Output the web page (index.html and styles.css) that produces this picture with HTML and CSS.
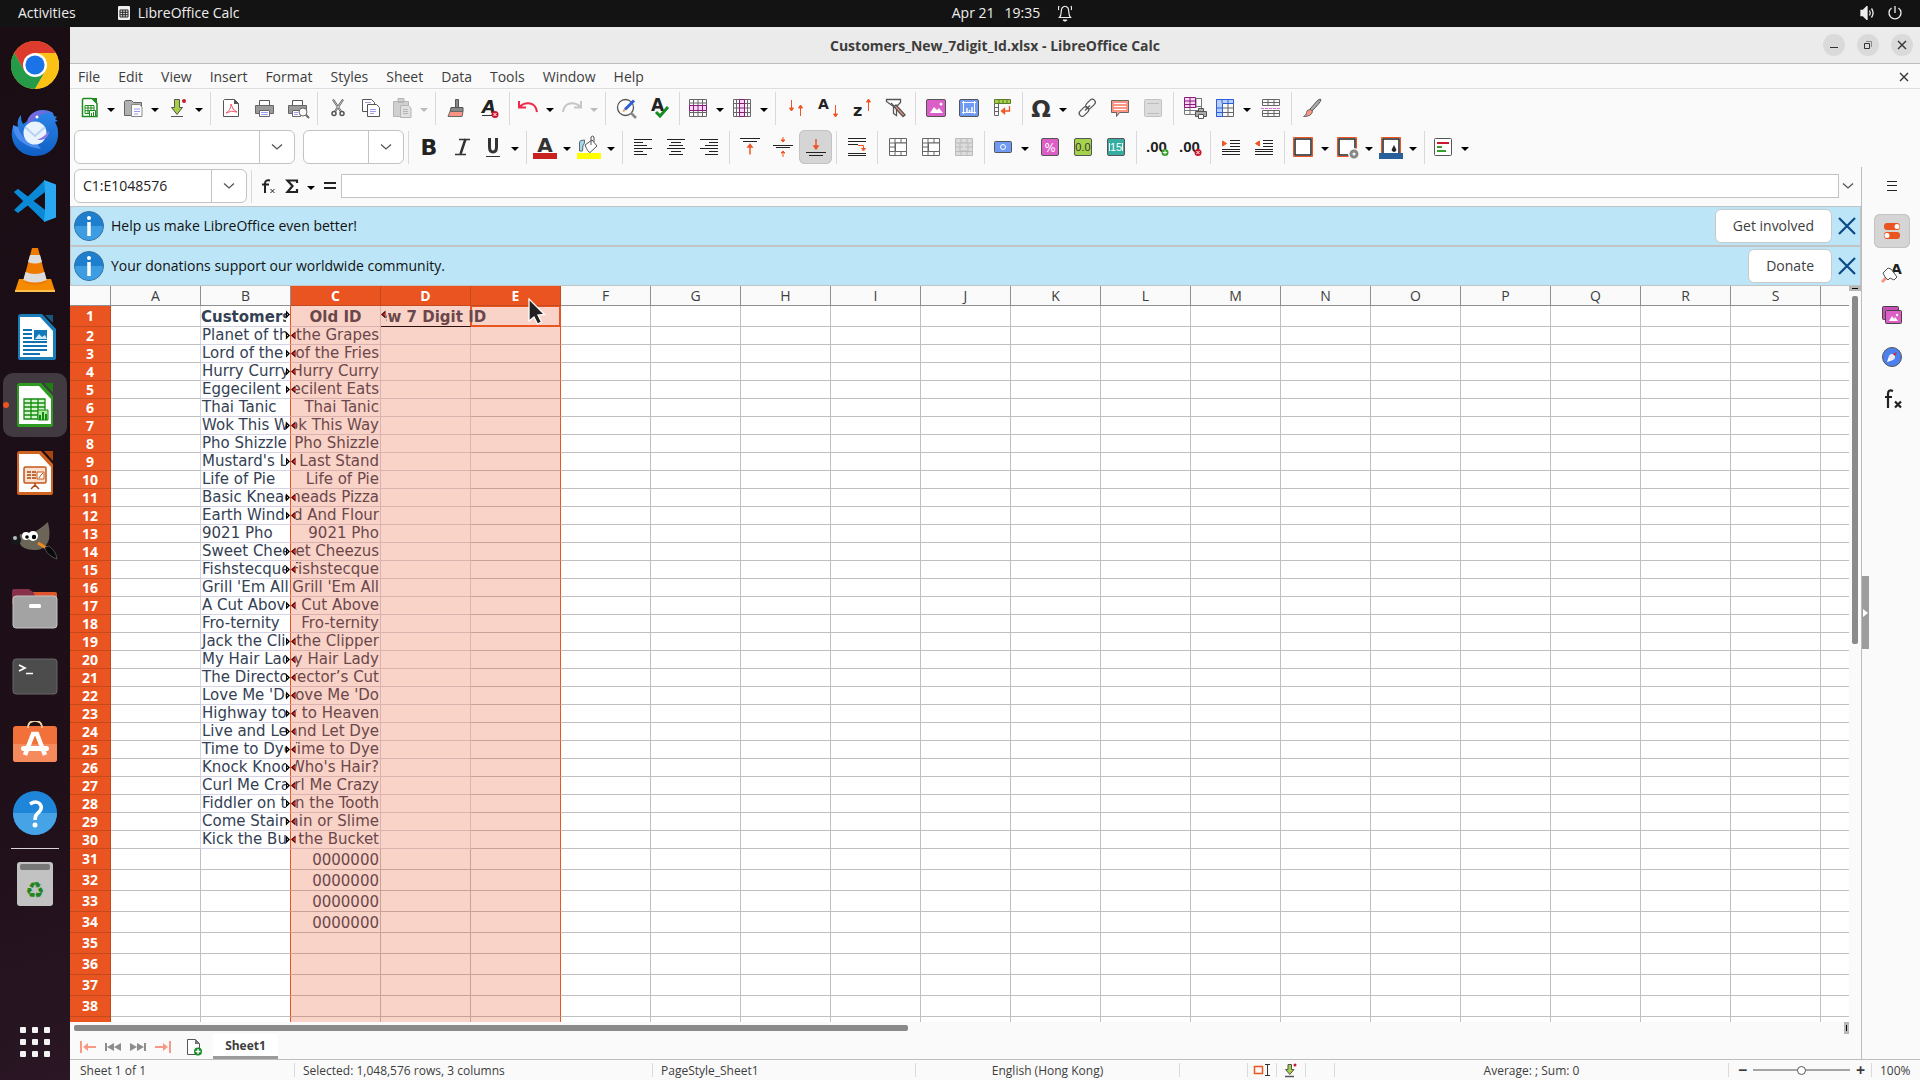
FILE: index.html
```html
<!DOCTYPE html>
<html lang="en">
<head>
<meta charset="utf-8">
<title>Customers_New_7digit_Id.xlsx - LibreOffice Calc</title>
<link rel="stylesheet" href="styles.css">
</head>
<body>
<header class="topbar">
  <div class="top-left">
    <button class="top-btn">Activities</button>
    <button class="top-btn app-btn"><svg width="12" height="14" viewBox="0 0 12 14"><rect width="12" height="14" rx="1" fill="#eee"/><path d="M2 4h8v7H2zM2 6.300h8M2 8.700h8M4.700 4v7M7.300 4v7" fill="none" stroke="#222"/></svg>LibreOffice Calc</button>
  </div>
  <button class="top-btn clock"><span>Apr 21</span><span>19:35</span></button>
  <div class="top-right">
    <svg class="bell" width="14" height="18" viewBox="0 0 14 18" fill="none" stroke="#eee" stroke-width="1.200"><path d="M1.500 13.500C4 11 2.500 7 4 4Q7 .5 10 4C11.500 7 10 11 12.500 13.500z"/><path d="M1 2Q0 4 0.800 6M13 2Q14 4 13.200 6"/><path d="M5 16h4l-2 1z" fill="#eee"/></svg>
    <svg width="16" height="14" viewBox="0 0 16 14" fill="none" stroke="#eee" stroke-width="1.300"><path d="M1 4.500h2l4-4v13l-4-4H1z" fill="#eee"/><path d="M9.500 4.500q1.600 2.500 0 5M11.500 2.500q3.200 4.500 0 9" /></svg>
    <svg width="14" height="14" viewBox="0 0 14 14" fill="none" stroke="#eee" stroke-width="1.300"><path d="M3.600 2A6 6 0 1 0 10.400 2M7 0v7"/></svg>
  </div>
</header>
<div class="desktop">
<nav class="dock" aria-label="Dock">
  <button class="dk" aria-label="Chrome"><svg viewBox="0 0 48 48"><circle cx="24" cy="24" r="24" fill="#fbc116"/><path d="M3.200 12A24 24 0 0 1 44.800 12H24L13.600 30z" fill="#dd3b2e"/><path d="M3.200 12A24 24 0 0 0 24 48L34.400 30 24 24 13.600 30z" fill="#259a49"/><path d="M24 12h20.800A24 24 0 0 1 24 48L34.400 30z" fill="#fbc116"/><circle cx="24" cy="24" r="12" fill="#fff"/><circle cx="24" cy="24" r="9.600" fill="#1b73e8"/></svg></button>
  <button class="dk" aria-label="Thunderbird"><svg viewBox="0 0 48 48"><defs><linearGradient id="tb" x1="0" y1="0" x2="0" y2="1"><stop offset="0" stop-color="#2f86e8"/><stop offset="1" stop-color="#0f5fc4"/></linearGradient></defs><path d="M10 6c-3 3-4 7-3 12L2 17c-5 16 6 30 22 30s24-12 23-24c0-5-2-8-3-10l3-1-3-2 2-2-3-1-1-3C34-1 22 0 17 10c-1 3-3 4-5 5-2-3-2-6-2-9z" fill="url(#tb)"/><path d="M17 10C21 1 33-1 42 4c-6-1-12 0-17 5-2 3-6 5-9 5z" fill="#6f6ae0"/><path d="M2 16c0 12 9 20 22 23l6 1-3-4C14 32 9 25 7 18z" fill="#4b8cf0"/><circle cx="24" cy="24" r="11.500" fill="#e9f3fd"/><path d="M14 18l10 9 10-9" fill="none" stroke="#b7d3ef" stroke-width="2"/><path d="M30 31c6-1 8-5 8-9-4 5-8 7-12 9z" fill="#8978e8"/><circle cx="26" cy="8" r="1.500" fill="#fff"/></svg></button>
  <button class="dk" aria-label="Visual Studio Code"><svg viewBox="0 0 48 48"><path d="M3 15l4-3 27 21v12z" fill="#0073bd"/><path d="M3 33l4 3 27-21V3z" fill="#0a8ad6"/><path d="M3 15l4-3 27 21v12z" fill="#0a8ad6"/><path d="M33 3l12 4.500v33L33 45l1-11V14z" fill="#2aa9f2"/></svg></button>
  <button class="dk" aria-label="VLC"><svg viewBox="0 0 48 48"><path d="M8 34h32l4 12H4z" fill="#f58b00"/><path d="M4 45h40v2H4z" fill="#ffc04a"/><path d="M21 3h6l9 34q-12 6-24 0z" fill="#ef7a00"/><path d="M19 10h10l2 7q-7 3-14 0zM14.500 27q9.500 4 19 0l2.200 8q-11.700 5-23.400 0z" fill="#dcdcdc"/></svg></button>
  <button class="dk" aria-label="Writer"><svg viewBox="0 0 48 48"><path d="M10 1h21l14 15v29q0 2-2 2H10q-3 0-3-2V4q0-3 3-3z" fill="#1b7db8"/><path d="M9 4h20l13 14v26H9z" fill="#fff"/><path d="M34 2h8v8z" fill="#13587f"/><path d="M12 17h9M12 21h9M12 25h9M12 29h24M12 33h24M12 37h24M12 41h17" stroke="#0f73b3" stroke-width="1.800"/><rect x="23" y="17" width="13" height="10" fill="#1379b8"/><path d="M24 26l4-5 3 3 3-2 2 4z" fill="#cfe8f8"/></svg></button>
  <button class="dk active" aria-label="LibreOffice Calc"><svg viewBox="0 0 48 48"><path d="M9 2h21l12 13v29q0 2-2 2H9q-3 0-3-2V5q0-3 3-3z" fill="#2c9b20"/><path d="M8 5h20l12 13v25H8z" fill="#fff"/><path d="M33 2h9v10z" fill="#1f7d14"/><path d="M13 18h21v20H13z" fill="#d5f5ce"/><path d="M13 18h21v20H13zM13 22h21M13 26h21M13 30h21M13 34h21M20 18v20M27 18v20" fill="none" stroke="#168a10" stroke-width="1.300"/><path d="M27 29h10v10H27z" fill="#a9eb9c" stroke="#168a10"/><path d="M29 39v-5M32 39v-8M35 39v-6" stroke="#168a10" stroke-width="2"/></svg></button>
  <button class="dk" aria-label="Impress"><svg viewBox="0 0 48 48"><path d="M9 2h21l12 13v29q0 2-2 2H9q-3 0-3-2V5q0-3 3-3z" fill="#d0631f"/><path d="M8 5h20l12 13v25H8z" fill="#fff"/><path d="M33 2h9v10z" fill="#aa4510"/><rect x="13" y="18" width="22" height="16" rx="1.500" fill="#fbe0cf" stroke="#c4561a" stroke-width="1.500"/><path d="M16 23h4M16 26h4M16 29h4M21 23h4M21 26h4M21 29h4M20 40l4-4 4 4M24 34v3" stroke="#a8470f" stroke-width="1.500" fill="none"/><path d="M26 23h7v7h-7zM28 29l2-3 2-2" fill="#fff" stroke="#c4561a"/></svg></button>
  <button class="dk" aria-label="GIMP"><svg viewBox="0 0 48 48"><path d="M9 17q6 2 12-1 7-3 16-11 3 14 0 20-4 9-14 8Q11 33 8 25z" fill="#6b6557"/><circle cx="5" cy="23" r="5" fill="#15191c"/><circle cx="4" cy="21" r="2" fill="#bbb"/><circle cx="15" cy="19" r="4" fill="#fff"/><circle cx="22" cy="19" r="5" fill="#fff"/><circle cx="16" cy="20" r="1.800"/><circle cx="23" cy="20" r="2.200"/><path d="M27 26l10 6" stroke="#f08c1c" stroke-width="3"/><path d="M34 30l4-1q7 5 8 13-9-3-12-10z" fill="#090909" stroke="#777" stroke-width=".6"/></svg></button>
  <button class="dk" aria-label="Files"><svg viewBox="0 0 48 48"><path d="M3 4h15l4 3h22q2 0 2 2v10H1V7q0-3 2-3z" fill="#86304a"/><path d="M22 7h22q2 0 2 2v8H28z" fill="#e0562a"/><rect x="2" y="11" width="44" height="32" rx="3" fill="#a3a3a3" stroke="#c4c4c4"/><rect x="18" y="19" width="12" height="4" rx="1.500" fill="#fff"/></svg></button>
  <button class="dk" aria-label="Terminal"><svg viewBox="0 0 48 48"><rect x="2" y="6" width="44" height="35" rx="3" fill="#4c4c4c" stroke="#666"/><path d="M8 12l6 3-6 3M15 20.500h7" stroke="#fff" stroke-width="1.700" fill="none"/></svg></button>
  <button class="dk" aria-label="Software"><svg viewBox="0 0 48 48"><path d="M17 7q0-7 7-7t7 7" fill="none" stroke="#f0d5a0" stroke-width="1.500"/><rect x="2" y="5" width="44" height="36" rx="3" fill="#f2713a"/><path d="M2 23h44v15q0 3-3 3H5q-3 0-3-3z" fill="#f58a5d"/><path d="M17 7q0-7 7-7t7 7" fill="none" stroke="#f0d5a0" stroke-width="1.500"/><path d="M14 34l8-21h4l8 21" fill="none" stroke="#fff" stroke-width="4.500"/><rect x="10" y="25" width="28" height="5" rx="2.500" fill="#fff"/></svg></button>
  <button class="dk" aria-label="Help"><svg viewBox="0 0 48 48"><circle cx="24" cy="24" r="22" fill="#1e85d8"/><path d="M2 24a22 22 0 0 0 44 0z" fill="#46a3e6"/><path d="M19 15q6-4 10 0 3 4-1 8-4 3-4 8" stroke="#fff" stroke-width="3.500" fill="none"/><circle cx="24" cy="36" r="2.500" fill="#fff"/></svg></button>
  <hr>
  <button class="dk" aria-label="Trash"><svg viewBox="0 0 48 48"><rect x="6" y="2" width="36" height="44" rx="3" fill="#c2c2c2"/><rect x="9" y="4" width="30" height="6" rx="2" fill="#777"/><text x="24" y="38" text-anchor="middle" font-family="DejaVu Sans" font-size="22" fill="#21851b">♻</text></svg></button>
  <button class="dk apps" aria-label="Show Applications"><svg viewBox="0 0 48 48" fill="#f3f3f3"><rect x="9" y="9" width="6" height="6" rx="1"/><rect x="21" y="9" width="6" height="6" rx="1"/><rect x="33" y="9" width="6" height="6" rx="1"/><rect x="9" y="21" width="6" height="6" rx="1"/><rect x="21" y="21" width="6" height="6" rx="1"/><rect x="33" y="21" width="6" height="6" rx="1"/><rect x="9" y="33" width="6" height="6" rx="1"/><rect x="21" y="33" width="6" height="6" rx="1"/><rect x="33" y="33" width="6" height="6" rx="1"/></svg></button>
</nav>
<main class="window">
  <div class="titlebar">
    <h1>Customers_New_7digit_Id.xlsx - LibreOffice Calc</h1>
    <div class="winbtns">
      <button aria-label="Minimize"><svg width="10" height="10" viewBox="0 0 10 10"><path d="M1 7.500h8" stroke="#333"/></svg></button>
      <button aria-label="Restore"><svg width="10" height="10" viewBox="0 0 10 10" fill="none" stroke="#333"><path d="M1.500 3.500h5v5h-5z"/><path d="M3 1.500h5.500V7" stroke="#888"/></svg></button>
      <button aria-label="Close"><svg width="10" height="10" viewBox="0 0 10 10"><path d="M1 1l8 8M9 1L1 9" stroke="#333" stroke-width="1.400"/></svg></button>
    </div>
  </div>
  <div class="menubar">
    <button>File</button><button>Edit</button><button>View</button><button>Insert</button><button>Format</button><button>Styles</button><button>Sheet</button><button>Data</button><button>Tools</button><button>Window</button><button>Help</button>
    <button class="docclose" aria-label="Close document"><svg width="10" height="10" viewBox="0 0 10 10"><path d="M1 1l8 8M9 1L1 9" stroke="#333" stroke-width="1.400"/></svg></button>
  </div>
  <div class="toolbar">
    <div class="split"><button class="ic" aria-label="New"><svg viewBox="0 0 24 24"><path d="M6.500 2.500H15l5 5V20.500H5.500V3.500z" fill="#fff" stroke="#1c8a1c" stroke-width="1.500"/><path d="M15 2h5v6z" fill="#1c8a1c"/><path d="M8 9.500h9v8H8zM8 12h9M8 14.700h9M11 9.500v8M14 9.500v8" fill="none" stroke="#1c8a1c"/><path d="M12.500 14.500h6v6h-6zM14.500 20v-3M16.500 20v-4" fill="#fff" stroke="#1c8a1c"/></svg></button><button class="dd" aria-label="New options"></button></div>
    <div class="split"><button class="ic" aria-label="Open"><svg viewBox="0 0 24 24"><path d="M3.500 19V5.500l1-1h6l2 2h8v13h-17z" fill="#b1b1b1" stroke="#666"/><path d="M10.500 8.500h8l2.500 2.500v9.500H10.500z" fill="#fff" stroke="#888"/><path d="M13 13h6M13 15.500h6M13 18h4" stroke="#9b9bf0"/></svg></button><button class="dd" aria-label="Open options"></button></div>
    <div class="split"><button class="ic" aria-label="Save"><svg viewBox="0 0 24 24"><path d="M9.500 3.500h5v8h3l-5.500 7-5.500-7h3z" fill="#a5cf45" stroke="#555"/><path d="M6 20.500h12" stroke="#555"/><circle cx="19" cy="5" r="2" fill="#c9182f"/></svg></button><button class="dd" aria-label="Save options"></button></div>
    <i class="sep"></i>
    <button class="ic" aria-label="Export PDF"><svg viewBox="0 0 24 24"><path d="M5.500 3.500h10l4 4v13h-15v-16z" fill="#fff" stroke="#555"/><path d="M15 3v5h5z" fill="#555"/><path d="M7 17q5-3 5-9 1 6 6 8-6-2-11 1z" fill="none" stroke="#f05868"/></svg></button>
    <button class="ic" aria-label="Print"><svg viewBox="0 0 24 24"><path d="M7.500 4.500h10v5h-10z" fill="#fff" stroke="#555"/><path d="M3.500 9.500h18v8h-18z" fill="#9a9a9a" stroke="#666"/><path d="M7.500 14.500h10v6h-10z" fill="#fff" stroke="#666"/><path d="M9 16.500h7M9 18.500h7" stroke="#9b9bf0"/></svg></button>
    <button class="ic" aria-label="Print preview"><svg viewBox="0 0 24 24"><path d="M7.500 4.500h10v5h-10z" fill="#fff" stroke="#555"/><path d="M3.500 9.500h18v8h-18z" fill="#9a9a9a" stroke="#666"/><path d="M7.500 14.500h8v6h-8z" fill="#fff" stroke="#666"/><path d="M9 16.500h4M9 18.500h4" stroke="#9b9bf0"/><circle cx="18" cy="16" r="4" fill="#fafafa" stroke="#666"/><path d="M21 19l3 3" stroke="#666" stroke-width="2"/></svg></button>
    <i class="sep"></i>
    <button class="ic" aria-label="Cut"><svg viewBox="0 0 24 24" fill="none" stroke="#555"><path d="M7 3.500l8 12M17 3.500l-8 12" stroke-width="2.200"/><path d="M7 3.500l8 12M17 3.500l-8 12" stroke="#ddd" stroke-width=".8"/><circle cx="8" cy="17.500" r="2" stroke-width="1.500"/><circle cx="16" cy="17.500" r="2" stroke-width="1.500"/></svg></button>
    <button class="ic" aria-label="Copy"><svg viewBox="0 0 24 24" fill="#fff" stroke="#555"><path d="M3.500 3.500h9l3 3v9h-12z"/><path d="M8.500 8.500h9l3 3v9h-12z"/><path d="M6 6.500h6M11 13.500h6M11 15.500h6M11 17.500h4" stroke="#9b9bf0"/></svg></button>
    <div class="split off"><button class="ic" aria-label="Paste" disabled><svg viewBox="0 0 24 24" fill="#d0d0d0" stroke="#b5b5b5"><path d="M3.500 5.500h15v15h-15zM8 2.500h6v4H8z"/><path d="M10.500 9.500h8l2.500 2.500v9.500H10.500z" fill="#e0e0e0"/><path d="M13 13.500h5M13 15.500h5M13 17.500h5"/></svg></button><button class="dd" aria-label="Paste options" disabled></button></div>
    <i class="sep"></i>
    <button class="ic" aria-label="Clone formatting"><svg viewBox="0 0 24 24"><path d="M11.500 3.500h3v8h-3z" fill="#888" stroke="#555"/><path d="M7 11.500h12v4H6z" fill="#888" stroke="#555"/><path d="M6 15.500h13l-1 5H4z" fill="#fb9482" stroke="#666"/></svg></button>
    <button class="ic" aria-label="Clear formatting"><svg viewBox="0 0 24 24"><text x="5" y="17" font-family="DejaVu Sans" font-weight="bold" font-style="italic" font-size="18" fill="#222">A</text><path d="M5 19.500h11" stroke="#333"/><circle cx="18" cy="18.500" r="3.500" fill="#c9182f"/><path d="M16.500 17l3 3M19.500 17l-3 3" stroke="#fff"/></svg></button>
    <i class="sep"></i>
    <div class="split"><button class="ic" aria-label="Undo"><svg viewBox="0 0 24 24" fill="none" stroke="#f0284a" stroke-width="2"><path d="M3 5v6.500h7M3.500 11Q8 6.500 14 7.500t7 8.500"/></svg></button><button class="dd" aria-label="Undo list"></button></div>
    <div class="split off"><button class="ic" aria-label="Redo" disabled><svg viewBox="0 0 24 24" fill="none" stroke="#c6c6c6" stroke-width="2"><path d="M21 5v6.500h-7M20.500 11Q16 6.500 10 7.500T3 16"/></svg></button><button class="dd" aria-label="Redo list" disabled></button></div>
    <i class="sep"></i>
    <button class="ic" aria-label="Find and replace"><svg viewBox="0 0 24 24" fill="none" stroke="#555"><circle cx="11.500" cy="11.500" r="8" stroke-width="1.300" fill="#fff"/><path d="M17 17l5 5" stroke="#888" stroke-width="2.500"/><path d="M11 13.500l9-9" stroke="#2d5fd8" stroke-width="3"/><path d="M9 15.500l2-2" stroke="#f2a05c" stroke-width="2"/></svg></button>
    <button class="ic" aria-label="Spelling"><svg viewBox="0 0 24 24"><text x="4" y="15" font-family="DejaVu Sans" font-weight="bold" font-size="17" fill="#222">A</text><path d="M9 16l4 4 8-9" fill="none" stroke="#168a24" stroke-width="3"/></svg></button>
    <i class="sep"></i>
    <div class="split"><button class="ic" aria-label="Row"><svg viewBox="0 0 24 24" fill="none"><path d="M3.500 3.500h17v17h-17zM3.500 7h17M3.500 16.500h17M7.500 3v17M12 3v17M16.500 3v17" stroke="#666"/><path d="M3.500 9.500h17v5h-17zM7.500 9v5M12 9v5M16.500 9v5" stroke="#8a1a7c" fill="#f5d5f2"/></svg></button><button class="dd" aria-label="Row options"></button></div>
    <div class="split"><button class="ic" aria-label="Column"><svg viewBox="0 0 24 24" fill="none"><path d="M3.500 3.500h17v17h-17zM3.500 7.500h17M3.500 12h17M3.500 16.500h17M6.500 3v17M17.500 3v17" stroke="#666"/><path d="M9.500 3.500h5v17h-5zM9 7.500h5M9 12h5M9 16.500h5" stroke="#8a1a7c" fill="#f5d5f2"/></svg></button><button class="dd" aria-label="Column options"></button></div>
    <i class="sep"></i>
    <button class="ic" aria-label="Sort"><svg viewBox="0 0 24 24" fill="#f05423" stroke="#f05423"><path d="M7.500 4v10M5.500 12h4l-2 3zM16.500 20V10M14.500 12h4l-2-3z"/></svg></button>
    <button class="ic" aria-label="Sort ascending"><svg viewBox="0 0 24 24"><text x="1" y="13" font-family="DejaVu Sans" font-weight="bold" font-size="14" fill="#222">A</text><path d="M18.500 9v11M16.500 18h4l-2 3z" fill="#f05423" stroke="#f05423"/></svg></button>
    <button class="ic" aria-label="Sort descending"><svg viewBox="0 0 24 24"><text x="3" y="20" font-family="DejaVu Sans" font-weight="bold" font-size="16" fill="#222">z</text><path d="M18.500 15V4M16.500 6h4l-2-3z" fill="#f05423" stroke="#f05423"/></svg></button>
    <button class="ic" aria-label="AutoFilter"><svg viewBox="0 0 24 24" stroke="#555" stroke-width="1.300"><path d="M3.500 3.500h14v3l-4 4v9l-3-2v-7l-7-5z" fill="#fff"/><path d="M8 7l5 5"/><path d="M13 9l9 10-2 1.500-9-10z" fill="#f79a85"/></svg></button>
    <i class="sep"></i>
    <button class="ic" aria-label="Insert image"><svg viewBox="0 0 24 24"><rect x="2.500" y="3.500" width="19" height="17" rx="1.500" fill="#dc5fc8" stroke="#555"/><path d="M6 17l4-6 3 3 2-2 4 5z" fill="#fff"/><circle cx="17" cy="8" r="1.500" fill="#fff"/></svg></button>
    <button class="ic" aria-label="Insert chart"><svg viewBox="0 0 24 24"><rect x="2.500" y="3.500" width="19" height="17" rx="1.500" fill="#6f9bf5" stroke="#555"/><path d="M5 6.500h14M5 16.500h14M6.500 5v13M17.500 5v13" stroke="#fff"/><path d="M10 16v-4M12.500 16v-2M15 16v-5" stroke="#fff" stroke-width="1.500"/></svg></button>
    <button class="ic" aria-label="Pivot table"><svg viewBox="0 0 24 24" fill="none"><path d="M4.500 3.500h16v4h-16zM9 3v4M13 3v4M17 3v4" fill="#a5d24b" stroke="#5c7a28"/><path d="M4.500 7.500v12h4v-12M4.500 11.500h4M4.500 15.500h4" stroke="#666"/><path d="M19.500 10v5h-7M14.500 12.500l-3 2.500 3 2.500z" stroke="#f05423" stroke-width="1.300" fill="none"/></svg></button>
    <i class="sep"></i>
    <div class="split"><button class="ic" aria-label="Special character"><svg viewBox="0 0 24 24"><text x="12" y="20.500" text-anchor="middle" font-family="DejaVu Sans" font-weight="bold" font-size="23" fill="#333">Ω</text></svg></button><button class="dd" aria-label="Special character list"></button></div>
    <button class="ic" aria-label="Hyperlink"><svg viewBox="0 0 24 24" fill="none" stroke="#555" stroke-width="1.200"><rect x="10" y="5" width="11" height="6" rx="3" transform="rotate(-45 15.500 8)"/><rect x="3.500" y="12.500" width="11" height="6" rx="3" transform="rotate(-45 9 15.500)"/><path d="M10 14.500l5-5"/></svg></button>
    <button class="ic" aria-label="Comment"><svg viewBox="0 0 24 24"><path d="M3.500 4.500h17v12h-9l-3 4v-4h-5z" fill="#fb9482" stroke="#666"/><path d="M6 7.500h12M6 10.500h12M6 13.500h12" stroke="#fff"/></svg></button>
    <button class="ic" aria-label="Headers and footers" disabled><svg viewBox="0 0 24 24"><rect x="3.500" y="3.500" width="17" height="17" rx="1" fill="#dcdcdc" stroke="#c2c2c2"/><path d="M6 7.500h12M6 17.500h12" stroke="#bdbdbd"/></svg></button>
    <i class="sep"></i>
    <button class="ic" aria-label="Print area"><svg viewBox="0 0 24 24" fill="none"><path d="M2.500 10.500h17M2.500 14.500h17M2.500 18.500h12M2.500 2v16M8 2v16M14 2v10M19.500 2v10M14 2.500h6" stroke="#777"/><path d="M2.500 1.500h11v10h-11zM8 1v10M2 5h11M2 8.500h11" fill="#f5d5f2" stroke="#8a1a7c"/><path d="M16.500 12.500h5v3h-5zM13.500 15.500h11v5h-11z" fill="#aaa" stroke="#555"/><path d="M16.500 18.500h5v4h-5z" fill="#fff" stroke="#555"/></svg></button>
    <div class="split"><button class="ic" aria-label="Freeze rows and columns"><svg viewBox="0 0 24 24" fill="none"><path d="M3.500 3.500h17v17h-17zM3.500 7.500h17M3.500 12h17M3.500 16.500h17M9 3v17M15 3v17" stroke="#666"/><path d="M3.500 3.500h17v4h-11v13h-6zM9 3v4M15 3v4M3 12h6M3 16.500h6" fill="#b9cffb" stroke="#2d5fd8"/></svg></button><button class="dd" aria-label="Freeze options"></button></div>
    <button class="ic" aria-label="Split window"><svg viewBox="0 0 24 24" fill="none" stroke="#666"><path d="M3.500 3.500h17v6h-17zM3.500 6.500h17M9 3v6M15 3v6M3.500 14.500h17v6h-17zM3.500 17.500h17M9 14v6M15 14v6"/><path d="M2 12.500h20" stroke="#e070d8" stroke-dasharray="3 1"/></svg></button>
    <i class="sep"></i>
    <button class="ic" aria-label="Draw functions"><svg viewBox="0 0 24 24"><path d="M10 13L18 4q3-2 3 0-1 3-9 11z" fill="#aaa" stroke="#555"/><path d="M3.500 20.500q3-1 3-4t4-3l2 2q-1 5-9 5z" fill="#fb9482" stroke="#666"/></svg></button>
  </div>
  <div class="toolbar">
    <div class="combo font-name"><input type="text" aria-label="Font name"><button aria-label="Font list"><svg width="12" height="8" viewBox="0 0 12 8"><path d="M1 1.500l5 4.500 5-4.500" fill="none" stroke="#555" stroke-width="1.300"/></svg></button></div>
    <div class="combo font-size"><input type="text" aria-label="Font size"><button aria-label="Font sizes"><svg width="12" height="8" viewBox="0 0 12 8"><path d="M1 1.500l5 4.500 5-4.500" fill="none" stroke="#555" stroke-width="1.300"/></svg></button></div>
    <i class="sep"></i>
    <button class="ic" aria-label="Bold"><svg viewBox="0 0 24 24"><text x="12" y="20" text-anchor="middle" font-family="DejaVu Sans" font-weight="bold" font-size="22" fill="#222">B</text></svg></button>
    <button class="ic" aria-label="Italic"><svg viewBox="0 0 24 24" fill="none" stroke="#333"><path d="M9 4.500h11M5 19.500h11" stroke-width="1.300"/><path d="M15.500 4l-5 15" stroke-width="2.500"/></svg></button>
    <div class="split"><button class="ic" aria-label="Underline"><svg viewBox="0 0 24 24" fill="none" stroke="#333"><path d="M8.500 3v9q0 5 3.500 5t3.500-5V3" stroke-width="3"/><path d="M5 21.500h14"/></svg></button><button class="dd" aria-label="Underline options"></button></div>
    <i class="sep"></i>
    <div class="split"><button class="ic" aria-label="Font color"><svg viewBox="0 0 24 24"><text x="12" y="17" text-anchor="middle" font-family="DejaVu Sans" font-weight="bold" font-size="20" fill="#333">A</text><path d="M0 18h24v6H0z" fill="#c9211e"/></svg></button><button class="dd" aria-label="Font color options"></button></div>
    <div class="split"><button class="ic" aria-label="Background color"><svg viewBox="0 0 24 24"><path d="M2.500 16V7q0-2 5-2v3q-2 1-2 8z" fill="#9fd8f0" stroke="#666"/><path d="M8 10l7-5 5 6-7 6.500q-2 0-5-7.500z" fill="#fff" stroke="#555"/><path d="M14 10V2q2-2 3 0v5" fill="none" stroke="#555"/><path d="M0 18h24v6H0z" fill="#ff0"/></svg></button><button class="dd" aria-label="Background color options"></button></div>
    <i class="sep"></i>
    <button class="ic" aria-label="Align left"><svg viewBox="0 0 24 24" stroke="#222"><path d="M3 4.500h18M3 7.500h9M3 10.500h13M3 13.500h18M3 16.500h9M3 19.500h13"/></svg></button>
    <button class="ic" aria-label="Align center"><svg viewBox="0 0 24 24" stroke="#222"><path d="M3 4.500h18M7 7.500h10M5 10.500h14M3 13.500h18M7 16.500h10M5 19.500h14"/></svg></button>
    <button class="ic" aria-label="Align right"><svg viewBox="0 0 24 24" stroke="#222"><path d="M3 4.500h18M12 7.500h9M8 10.500h13M3 13.500h18M12 16.500h9M8 19.500h13"/></svg></button>
    <i class="sep"></i>
    <button class="ic" aria-label="Align top"><svg viewBox="0 0 24 24" stroke="#222"><path d="M2 3.500h20M5 6.500h14"/><path d="M12 19.500V12M10 12h4l-2-2.500z" stroke="#f05423" fill="#f05423" stroke-width="1.500"/></svg></button>
    <button class="ic" aria-label="Center vertically"><svg viewBox="0 0 24 24" stroke="#222"><path d="M2 10.500h20M5 12.500h14"/><path d="M12 2v3M10 5h4l-2 2zM12 22v-3M10 18h4l-2-2z" stroke="#f05423" fill="#f05423"/></svg></button>
    <button class="ic on" aria-label="Align bottom"><svg viewBox="0 0 24 24" stroke="#222"><path d="M2 17.500h20M5 20.500h14"/><path d="M12 4v8M10 11h4l-2 3z" stroke="#f05423" fill="#f05423" stroke-width="1.500"/></svg></button>
    <i class="sep"></i>
    <button class="ic" aria-label="Wrap text"><svg viewBox="0 0 24 24" stroke="#222"><path d="M3 3.500h18M3 6.500h18M3 9.500h10M3 18.500h18M3 20.500h18"/><path d="M13 10.500h5.500V15M16.500 13.500h4l-2 2.500z" fill="none" stroke="#f05423"/></svg></button>
    <i class="sep"></i>
    <button class="ic" aria-label="Merge and center"><svg viewBox="0 0 24 24" fill="#fff" stroke="#666"><path d="M3.500 3.500h17v17h-17zM3.500 8h17M3.500 16.500h17M9 3v17M15 3v5M15 16v4M3 12h6"/><path d="M9.500 8h11v8.500h-11z"/></svg></button>
    <button class="ic" aria-label="Merge cells"><svg viewBox="0 0 24 24" fill="#fff" stroke="#666"><path d="M3.500 3.500h17v17h-17zM3.500 8h17M3.500 16.500h17M9 3v17M15 3v5M15 16v4M3 12h6"/><path d="M9.500 8h11v8.500h-11z"/></svg></button>
    <button class="ic" aria-label="Split cells" disabled><svg viewBox="0 0 24 24" fill="#dcdcdc" stroke="#bbb"><path d="M3.500 3.500h17v17h-17zM3.500 8h17M3.500 16.500h17M9 3v17M15 3v17M3 12h6M15 12h5"/><path d="M8 8h8v8H8z"/><path d="M8 12h3M13 12h3"/></svg></button>
    <i class="sep"></i>
    <div class="split"><button class="ic" aria-label="Currency"><svg viewBox="0 0 24 24"><rect x="3.500" y="6.500" width="17" height="11" rx="1" fill="#6f9bf5" stroke="#555"/><circle cx="12" cy="12" r="2.500" fill="none" stroke="#fff"/></svg></button><button class="dd" aria-label="Currency options"></button></div>
    <i class="gap"></i>
    <button class="ic" aria-label="Percent"><svg viewBox="0 0 24 24"><rect x="3.500" y="3.500" width="17" height="17" rx="1.500" fill="#dc5fc8" stroke="#555"/><text x="12" y="17" text-anchor="middle" font-family="DejaVu Sans Condensed" font-size="13" fill="#fff">%</text></svg></button>
    <button class="ic" aria-label="Number"><svg viewBox="0 0 24 24"><rect x="3.500" y="3.500" width="17" height="17" rx="1.500" fill="#a5d24b" stroke="#555"/><text x="12" y="16" text-anchor="middle" font-family="Liberation Sans" font-size="11" fill="#333">0.0</text></svg></button>
    <button class="ic" aria-label="Date"><svg viewBox="0 0 24 24"><rect x="3.500" y="3.500" width="17" height="17" rx="1.500" fill="#37aca0" stroke="#555"/><path d="M5.500 8v8M18.500 8v8" stroke="#fff"/><text x="12" y="16" text-anchor="middle" font-family="Liberation Sans" font-size="11" fill="#fff">15</text></svg></button>
    <i class="sep"></i>
    <button class="ic" aria-label="Add decimal place"><svg viewBox="0 0 24 24"><text x="1" y="17" font-family="Liberation Sans" font-weight="bold" font-size="15" fill="#222">.00</text><circle cx="20" cy="17.500" r="3.500" fill="#35a02a"/><path d="M18 17.500h4M20 15.500v4" stroke="#fff"/></svg></button>
    <button class="ic" aria-label="Delete decimal place"><svg viewBox="0 0 24 24"><text x="1" y="17" font-family="Liberation Sans" font-weight="bold" font-size="15" fill="#222">.00</text><circle cx="20" cy="17.500" r="3.500" fill="#c9182f"/><path d="M18.500 16l3 3M21.500 16l-3 3" stroke="#fff"/></svg></button>
    <i class="sep"></i>
    <button class="ic" aria-label="Increase indent"><svg viewBox="0 0 24 24" stroke="#222"><path d="M11 5.500h10M11 8.500h10M11 11.500h10M3 14.500h18M3 16.500h18M3 19.500h18"/><path d="M3.500 6l4 2.500-4 2.500z" fill="#f05423" stroke="#f05423"/></svg></button>
    <button class="ic" aria-label="Decrease indent"><svg viewBox="0 0 24 24" stroke="#222"><path d="M11 5.500h10M11 8.500h10M11 11.500h10M3 14.500h18M3 16.500h18M3 19.500h18"/><path d="M7.500 6l-4 2.500 4 2.500z" fill="#f05423" stroke="#f05423"/></svg></button>
    <i class="sep"></i>
    <div class="split"><button class="ic" aria-label="Borders"><svg viewBox="0 0 24 24"><path d="M2.500 2.500h19v19h-19z" fill="#fff" stroke="#f05423"/><path d="M4 4h16v16H4z" fill="#fff" stroke="#222" stroke-width="1.500"/></svg></button><button class="dd" aria-label="Border options"></button></div>
    <div class="split"><button class="ic" aria-label="Border style"><svg viewBox="0 0 24 24"><path d="M2.500 2.500h19v19h-19z" fill="#fff" stroke="#f05423"/><path d="M4 4h16v16H4z" fill="#fff" stroke="#222" stroke-width="1.500"/><circle cx="19" cy="19" r="6" fill="#fafafa"/><circle cx="19" cy="19" r="3" fill="none" stroke="#888" stroke-width="3"/></svg></button><button class="dd" aria-label="Border style options"></button></div>
    <div class="split"><button class="ic" aria-label="Border color"><svg viewBox="0 0 24 24"><path d="M2.500 2.500h19v19h-19z" fill="#fff" stroke="#f05423"/><path d="M4 4h16v16H4z" fill="#fff" stroke="#222" stroke-width="1.500"/><path d="M15 10l2.500 5q-2.500 4-5 0z" fill="#222"/><path d="M0 18h24v6H0z" fill="#2a6099"/></svg></button><button class="dd" aria-label="Border color options"></button></div>
    <i class="sep"></i>
    <div class="split"><button class="ic" aria-label="Conditional formatting"><svg viewBox="0 0 24 24"><rect x="3.500" y="3.500" width="17" height="17" rx="1" fill="#fff" stroke="#555"/><path d="M6 8h12" stroke="#c9182f" stroke-width="2"/><path d="M6 12h5M6 16h9" stroke="#35a02a" stroke-width="2"/></svg></button><button class="dd" aria-label="Conditional formatting options"></button></div>
  </div>
  <div class="workspace">
    <div class="docpane">
      <div class="toolbar formula">
        <div class="combo name-box"><input type="text" aria-label="Name Box" value="C1:E1048576"><button aria-label="Name list"><svg width="12" height="8" viewBox="0 0 12 8"><path d="M1 1.500l5 4.500 5-4.500" fill="none" stroke="#555" stroke-width="1.300"/></svg></button></div>
        <i class="sep"></i>
        <button class="fbtn" aria-label="Function wizard"><svg viewBox="0 0 24 24" fill="none" stroke="#222"><path d="M13 6.500q-5-1-5 3V19M5 10.500h7" stroke-width="2"/><path d="M13.500 15l4 4M17.500 15l-4 4"/></svg></button>
        <button class="fbtn" aria-label="Select function"><svg viewBox="0 0 24 24"><path d="M17 9V6.500H7.500l5 5.500-5 6H17v-3" fill="none" stroke="#222" stroke-width="2.200"/></svg></button>
        <button class="dd" aria-label="Function list"></button>
        <button class="fbtn" aria-label="Formula"><svg viewBox="0 0 24 24"><path d="M6 9h12M6 14h12" stroke="#222" stroke-width="2"/></svg></button>
        <input class="finput" type="text" aria-label="Formula input">
        <button class="expand" aria-label="Expand formula bar"><svg width="12" height="8" viewBox="0 0 12 8"><path d="M1 1.500l5 4.500 5-4.500" fill="none" stroke="#555" stroke-width="1.300"/></svg></button>
      </div>
      <div class="infobar"><svg width="30" height="30" viewBox="0 0 30 30"><circle cx="15" cy="15" r="14.500" fill="#1f7fcf" stroke="#3a6f9c"/><path d="M1 15a14 14 0 0 0 28 0z" fill="#3d9de2"/><circle cx="15" cy="7" r="2" fill="#fff"/><path d="M15 11v14" stroke="#fff" stroke-width="3.500"/></svg><p>Help us make LibreOffice even better!</p><button class="act">Get involved</button><button class="x" aria-label="Close"><svg width="18" height="18" viewBox="0 0 18 18"><path d="M1 1l16 16M17 1L1 17" stroke="#0b4a86" stroke-width="2.200"/></svg></button></div>
      <div class="infobar"><svg width="30" height="30" viewBox="0 0 30 30"><circle cx="15" cy="15" r="14.500" fill="#1f7fcf" stroke="#3a6f9c"/><path d="M1 15a14 14 0 0 0 28 0z" fill="#3d9de2"/><circle cx="15" cy="7" r="2" fill="#fff"/><path d="M15 11v14" stroke="#fff" stroke-width="3.500"/></svg><p>Your donations support our worldwide community.</p><button class="act">Donate</button><button class="x" aria-label="Close"><svg width="18" height="18" viewBox="0 0 18 18"><path d="M1 1l16 16M17 1L1 17" stroke="#0b4a86" stroke-width="2.200"/></svg></button></div>
      <div class="gridrow">
        <div class="gridwrap">
          <table class="grid"><colgroup id="cols"></colgroup><thead id="head"></thead><tbody id="rows"></tbody></table>
          <svg class="cursor" width="18" height="28" viewBox="0 0 18 28"><path d="M1 1v22l5-4 3.500 7 4-2-3.500-7 6.500-.5z" fill="#222" stroke="#fff" stroke-width="1.300"/></svg>
        </div>
        <div class="vscroll"><i class="splitter"></i><i class="vthumb"></i></div>
      </div>
      <div class="hscroll"><i class="hthumb"></i><i class="splitter"></i></div>
      <div class="tabs">
        <button aria-label="First sheet"><svg width="18" height="14" viewBox="0 0 18 14" stroke="#f79a85" stroke-width="2" fill="#f79a85"><path d="M2 1v12M17 7H6"/><path d="M9 3v8L4 7z" stroke="none"/></svg></button>
        <button aria-label="Previous sheet"><svg width="18" height="14" viewBox="0 0 18 14" fill="#8c8c8c"><path d="M1 3h2v8H1zM10 3v8L3 7zM17 3v8l-7-4z"/></svg></button>
        <button aria-label="Next sheet"><svg width="18" height="14" viewBox="0 0 18 14" fill="#8c8c8c"><path d="M17 3h-2v8h2zM8 3v8l7-4zM1 3v8l7-4z"/></svg></button>
        <button aria-label="Last sheet"><svg width="18" height="14" viewBox="0 0 18 14" stroke="#f79a85" stroke-width="2" fill="#f79a85"><path d="M16 1v12M1 7h11"/><path d="M9 3v8l5-4z" stroke="none"/></svg></button>
        <button class="add" aria-label="Add sheet"><svg width="18" height="18" viewBox="0 0 18 18"><path d="M2.500 1.500h8l4 4v11h-12z" fill="#fff" stroke="#555"/><path d="M10 1v5h5z" fill="#777"/><circle cx="13" cy="13.500" r="4" fill="#168a24"/><path d="M10.500 13.500h5M13 11v5" stroke="#fff" stroke-width="1.300"/></svg></button>
        <button class="tab">Sheet1</button>
      </div>
    </div>
    <aside class="sidebar">
      <button class="settings" aria-label="Sidebar settings"><svg viewBox="0 0 24 24" stroke="#222"><path d="M7 7.500h10M7 11.500h10M7 16.500h10"/></svg></button>
      <button class="on" aria-label="Properties"><svg viewBox="0 0 24 24"><rect x="4" y="4" width="16" height="7" rx="3" fill="#e95420"/><rect x="4" y="13" width="16" height="7" rx="3" fill="#e95420"/><circle cx="17" cy="7.500" r="2.500" fill="#fff"/><circle cx="7" cy="16.500" r="2.500" fill="#fff"/></svg></button>
      <button aria-label="Styles"><svg viewBox="0 0 24 24"><text x="11" y="13" font-family="DejaVu Sans" font-weight="bold" font-size="14" fill="#222">A</text><path d="M2 21l4-4" stroke="#fb9482" stroke-width="3"/><path d="M3 12l5-5 3 1 6 8-3 3-4-2-2 2-3-3z" fill="#fff" stroke="#555"/></svg></button>
      <button aria-label="Gallery"><svg viewBox="0 0 24 24"><rect x="2.500" y="3.500" width="16" height="13" rx="1" fill="#c94fb8" stroke="#444"/><rect x="5.500" y="7.500" width="16" height="13" rx="1" fill="#dc5fc8" stroke="#444"/><path d="M9 18l3-5 2 3 1-2 3 4z" fill="#fff"/><circle cx="17" cy="12" r="1.200" fill="#fff"/></svg></button>
      <button aria-label="Navigator"><svg viewBox="0 0 24 24"><circle cx="12" cy="12" r="9.500" fill="#4b80ee" stroke="#555"/><path d="M7 17l2-6 4 4z" fill="#fff"/><circle cx="12" cy="12" r="3" fill="#e8e8f4"/><path d="M13 9l4-2-2 4z" fill="#d8202f"/></svg></button>
      <button aria-label="Functions"><svg viewBox="0 0 24 24" fill="none" stroke="#222"><path d="M13 4q-5-2-5 3v14M5 10h7" stroke-width="2.200"/><path d="M15 14.500l6 6M21 14.500l-6 6" stroke-width="2.200"/></svg></button>
      <button class="handle" aria-label="Hide sidebar"></button>
    </aside>
  </div>
  <footer class="status">
    <span class="s-sheet">Sheet 1 of 1</span>
    <span class="s-sel">Selected: 1,048,576 rows, 3 columns</span>
    <span class="s-page">PageStyle_Sheet1</span>
    <span class="s-lang">English (Hong Kong)</span>
    <span class="s-ins"></span>
    <span class="s-ico"><svg width="18" height="12" viewBox="0 0 18 12" fill="none"><path d="M1.500 2.500h8v7h-8z" stroke="#e95420" stroke-width="1.500"/><path d="M12 .5h5M12 11.500h5M14.500 1v10" stroke="#333"/></svg></span>
    <span class="s-ico"><svg width="14" height="16" viewBox="0 0 14 16"><path d="M4 2.500h3.500v5H10l-4.200 5-4.200-5H4z" fill="#a5cf45" stroke="#555"/><path d="M1 14.500h9" stroke="#555" stroke-width="1.500"/><circle cx="11" cy="3" r="1.500" fill="#c9182f"/></svg></span>
    <span class="s-ico"></span>
    <span class="s-sum">Average: ; Sum: 0</span>
    <span class="s-zoom"><button aria-label="Zoom out">−</button><input type="range" aria-label="Zoom" min="0" max="100" value="50"><button aria-label="Zoom in">+</button></span>
    <span class="s-pct">100%</span>
  </footer>
</main>
</div>
<script src="grid.js"></script>
</body>
</html>
```
FILE: styles.css
```css
* { box-sizing: border-box; }
html, body { margin: 0; height: 100%; }
body {
  display: flex; flex-direction: column; overflow: hidden;
  font: 14px/20px "Open Sans", "Noto Sans", sans-serif; color: #3d3d3d; background: #fafafa;
}
button, input { font: inherit; color: inherit; padding: 0; border: 0; background: none; border-radius: 0; margin: 0; }
svg { display: block; flex: none; }

.topbar { flex: none; height: 27px; padding: 0 18px 2px; background: #131313; color: #eee; display: grid; grid-template-columns: 1fr auto 1fr; align-items: center; }
.top-left { display: flex; gap: 42px; }
.top-btn { display: flex; align-items: center; gap: 8px; white-space: nowrap; }
.clock { gap: 10px; padding-left: 72px; }
.top-right { display: flex; align-items: center; gap: 12px; }
.bell { margin: 0 auto 0 18px; }

.desktop { flex: 1; min-height: 0; display: flex; }
.dock { flex: none; width: 70px; padding: 6px 3px; display: flex; flex-direction: column; align-items: center; gap: 4px; background: linear-gradient(160deg, #1a0d14, #1e0f18 70%, #2a1624); }
.dk { position: relative; width: 64px; height: 64px; border-radius: 10px; display: grid; place-items: center; flex: none; }
.dk svg { width: 48px; height: 48px; }
.dk.active { background: #413a41; }
.dk.active::before { content: ""; position: absolute; left: 0; top: 29px; width: 6px; height: 6px; border-radius: 3px; background: #e95420; }
.dock hr { flex: none; width: 48px; height: 1px; margin: -1px 0; border: 0; background: #d8d4d6; }
.dk.apps { margin-top: auto; }

.window { flex: 1; min-width: 0; display: flex; flex-direction: column; background: #fafafa; }
.titlebar { flex: none; height: 37px; padding-top: 2px; background: #ebebeb; border-bottom: 1px solid #bdbdbd; display: grid; place-items: center; position: relative; }
.titlebar h1 { margin: 0; font-size: 14px; line-height: 20px; font-weight: 700; }
.winbtns { position: absolute; right: 7px; top: 7px; display: flex; gap: 12px; }
.winbtns button { width: 22px; height: 22px; border-radius: 11px; background: #dadada; display: grid; place-items: center; }
.menubar { flex: none; height: 25px; padding: 1px 11px 0 8px; display: flex; gap: 18px; border-bottom: 1px solid #dedede; }
.docclose { margin-left: auto; }

.toolbar { flex: none; height: 39px; padding: 2px 0 3px 4px; display: flex; }
.split { display: flex; flex: none; width: 44px; }
.gap { flex: none; width: 1px; }
.ic { flex: none; width: 33px; height: 34px; padding: 0 4px 0 5px; display: flex; align-items: center; border-radius: 6px; }
.split .ic { width: 29px; padding: 0 2px 0 3px; }
.ic svg, .fbtn svg, .sidebar svg { width: 24px; height: 24px; overflow: visible; }
.ic.on { background: #d5d5d5; box-shadow: inset 0 0 0 1px #c3c3c3; }
.dd { flex: none; width: 15px; height: 34px; display: grid; place-items: center; }
.dd::after { content: ""; border: 4px solid transparent; border-top-color: #000; border-bottom: 0; margin-top: 3px; }
.off .dd::after { border-top-color: #bbb; }
.sep { flex: none; width: 1px; height: 33px; margin: 1px 3px 0 4px; background: #d9d9d9; }
.combo { flex: none; height: 34px; display: flex; background: #fff; border: 1px solid #c3c3c3; border-radius: 6px; overflow: hidden; }
.combo input { flex: 1; min-width: 0; padding: 0 8px; color: #222; }
.combo button { width: 35px; border-left: 1px solid #c3c3c3; display: grid; place-items: center; }
.font-name { width: 221px; margin-right: 8px; }
.font-size { width: 101px; }
.name-box { width: 173px; }
.fbtn { flex: none; width: 23px; height: 34px; display: grid; place-items: center; }
.formula .sep { margin-right: 5px; }
.finput { flex: 1; min-width: 0; height: 24px; margin: 5px 0; border: 1px solid #c3c3c3; background: #fff; }
.expand { width: 22px; display: grid; place-items: center; padding-right: 4px; }

.workspace { flex: 1; min-height: 0; display: flex; }
.docpane { flex: 1; min-width: 0; display: flex; flex-direction: column; }
.infobar { flex: none; height: 40px; display: flex; align-items: center; padding: 0 1px 0 3px; background: #bce5f7; border: 1px solid #c3c3c3; color: #111; }
.infobar p { margin: 0 auto 0 7px; font-size: 14px; }
.act { height: 34px; padding: 0 17px; background: #fff; border: 1px solid #c9c9c9; border-radius: 6px; color: #3d3d3d; }
.x { width: 24px; margin-left: 3px; display: grid; place-items: center; }

.gridrow { flex: 1; min-height: 0; display: flex; }
.gridwrap { flex: 1; min-width: 0; overflow: hidden; position: relative; background: #fff; }
.grid { width: 100%; table-layout: fixed; border-collapse: separate; border-spacing: 0; }
.c-head { width: 41px; }
.c-data { width: 90px; }
.grid th, .grid td { padding: 0; border: 0 solid #c0c0c0; border-width: 0 1px 1px 0; }
.grid th { font-weight: 400; font-size: 14px; line-height: 19px; background: #fafafa; border-color: #909090; }
.grid thead th { height: 20px; }
.grid th.hot { font-weight: 700; color: #fff; background: #e95420; border-color: #c4491d; }
.grid tbody th { vertical-align: top; height: 18px; line-height: 17px; }
.grid .tall th { height: 21px; line-height: 20px; padding-top: 0; }
.grid tr > :last-child { border-right: 0; }
.cell { position: relative; display: flex; height: 17px; padding: 0 1px; font: 15px/17px "DejaVu Sans", sans-serif; color: #344154; white-space: nowrap; overflow: hidden; }
.tall .cell { height: 20px; line-height: 23px; }
.grid .used .a { border-right-color: #d4d4e6; }
.grid .used .b { border-bottom-color: #d4d4e6; }
.grid .b { border-right-color: #e95420; }
.grid .c, .grid .d, .grid .e { background: #f9d3c7; border-color: #c9a297; }
.grid .used .c, .grid .used .d { border-color: #dcb2b0; }
.grid .e { border-right-color: #e95420; }
.c .cell { justify-content: flex-end; color: #6b474b; }
.title .cell { font-weight: 700; }
.title .b .cell { padding: 0; }
.title .c .cell, .title .d .cell { justify-content: center; color: #6b474b; }
.title .d .cell { overflow: visible; clip-path: inset(0 -40px 0 0); z-index: 1; }
.grid .title .d { border-bottom-color: #2a1210; border-right-color: #e95420; }
.grid .title .e { border-color: #e95420; box-shadow: inset 0 0 0 1px #e95420; }
.more { position: absolute; top: 4px; width: 5px; height: 9px; background: #f9d3c7; box-shadow: 0 -4px #f9d3c7, 0 4px #f9d3c7; }
.more.r { right: 0; width: 4px; background: #fff; box-shadow: 0 -4px #fff, 0 4px #fff; }
.more.l { left: 0; }
.cursor { position: absolute; left: 458px; top: 12px; }

.vscroll { flex: none; width: 12px; display: flex; flex-direction: column; align-items: center; }
.vscroll .splitter { width: 12px; height: 5px; background: linear-gradient(#000, #000) center / 6px 1px no-repeat #b8b8b8; }
.vthumb { width: 6px; height: 348px; margin-top: 5px; border-radius: 2px; background: #8a8a8a; }
.hscroll { flex: none; height: 12px; padding: 0 12px 0 4px; display: flex; align-items: center; justify-content: space-between; }
.hthumb { width: 47%; height: 6px; border-radius: 2px; background: #8a8a8a; }
.hscroll .splitter { width: 5px; height: 12px; background: linear-gradient(#000, #000) center / 1px 6px no-repeat #b8b8b8; }
.tabs { flex: none; height: 25px; padding-left: 9px; display: flex; align-items: center; gap: 7px; }
.tabs .add { margin: 0 3px 0 6px; }
.tab { align-self: stretch; width: 65px; padding-top: 2px; background: #fff; border-bottom: 3px solid #9b9b9b; font-size: 12px; font-weight: 700; }

.sidebar { position: relative; flex: none; width: 59px; padding: 2px 5px 0 12px; border-left: 1px solid #bdbdbd; display: flex; flex-direction: column; align-items: flex-start; gap: 8px; }
.sidebar button { width: 36px; height: 34px; border-radius: 6px; display: grid; place-items: center; }
.sidebar .settings { margin-bottom: 3px; }
.sidebar button.on { background: #d5d5d5; box-shadow: inset 0 0 0 1px #c3c3c3; }
.sidebar button.handle { position: absolute; left: 0; top: 409px; width: 7px; height: 73px; border-radius: 0; background: #9d9d9d; }
.handle::after { content: ""; border: 4px solid transparent; border-left: 5px solid #fff; border-right: 0; }

.status { flex: none; height: 21px; border-top: 1px solid #bdbdbd; display: flex; font-size: 12px; }
.status span { height: 14px; margin: 3px 0; padding-left: 8px; line-height: 16px; border-left: 1px solid #dadada; white-space: nowrap; flex: none; display: flex; align-items: flex-start; }
.status .s-sheet { width: 224px; border: 0; padding-left: 10px; }
.status .s-sel { flex: 349 0 0; }
.status .s-page { flex: 254 0 0; }
.status .s-lang { flex: 263 0 0; justify-content: center; padding: 0; }
.status .s-ins { width: 68px; }
.status .s-ico { width: 29px; padding: 0; justify-content: center; align-items: center; }
.status .s-sum { flex: 393 0 0; justify-content: center; padding: 0; }
.status .s-zoom { width: 143px; gap: 6px; padding-left: 9px; align-items: center; }
.s-zoom button { width: 9px; font-size: 16px; line-height: 12px; font-weight: 700; }
.s-zoom input { appearance: none; width: 97px; height: 12px; background: linear-gradient(#a5a5a5, #a5a5a5) center / 100% 2px no-repeat; }
.s-zoom input::-webkit-slider-thumb { appearance: none; width: 9px; height: 9px; border: 1px solid #555; border-radius: 5px; background: #fff; }
.status .s-pct { width: 49px; }
```
FILE: grid.js
```js
const names = [
  "Planet of the Grapes", "Lord of the Fries", "Hurry Curry", "Eggecilent Eats", "Thai Tanic",
  "Wok This Way", "Pho Shizzle", "Mustard's Last Stand", "Life of Pie", "Basic Kneads Pizza",
  "Earth Wind And Flour", "9021 Pho", "Sweet Cheezus", "Fishstecque", "Grill 'Em All",
  "A Cut Above", "Fro-ternity", "Jack the Clipper", "My Hair Lady", "The Director’s Cut",
  "Love Me 'Do", "Highway to Heaven", "Live and Let Dye", "Time to Dye", "Knock Knock Who's Hair?",
  "Curl Me Crazy", "Fiddler on the Tooth", "Come Stain or Slime", "Kick the Bucket"
];
const fits = ["Thai Tanic", "Pho Shizzle", "Life of Pie", "9021 Pho", "Grill 'Em All", "Fro-ternity"];
const letters = "ABCDEFGHIJKLMNOPQRS".split("");
const arrow = {
  r: '<svg class="more r" viewBox="0 0 4 9"><path d="M0 .5v8l4-4z" fill="#000"/><path d="M1 3.500v2l1-1z" fill="#fff"/></svg>',
  l: '<svg class="more l" viewBox="0 0 5 9"><path d="M4.500 .5v8L0 4.500z" fill="#300"/><path d="M4 2.500v4L1.500 4.500z" fill="#e22"/></svg>'
};
const cell = (text, mark = "") => `<div class="cell">${text}${mark}</div>`;

document.getElementById("cols").innerHTML =
  '<col class="c-head">' + letters.map(() => '<col class="c-data">').join("") + "<col>";
document.getElementById("head").innerHTML = "<tr><th></th>" +
  letters.map(l => `<th scope="col"${"CDE".includes(l) ? ' class="hot"' : ""}>${l}</th>`).join("") + "<th></th></tr>";

let html = "";
for (let n = 1; n <= 39; n++) {
  const kind = n === 1 ? "tall used title" : n <= 30 ? "used" : "tall";
  const text = {};
  if (n === 1) {
    text.B = cell("Customers", arrow.r);
    text.C = cell("Old ID");
    text.D = cell("New 7 Digit ID", arrow.l);
  } else if (n <= 30) {
    const name = names[n - 2];
    const over = !fits.includes(name);
    text.B = cell(name, over ? arrow.r : "");
    text.C = cell(name, over ? arrow.l : "");
  } else if (n <= 34) {
    text.C = cell("0000000");
  }
  html += `<tr class="${kind}"><th scope="row" class="hot">${n}</th>` +
    letters.map(l => `<td class="${l.toLowerCase()}">${text[l] || ""}</td>`).join("") + "<td></td></tr>";
}
document.getElementById("rows").innerHTML = html;
```
